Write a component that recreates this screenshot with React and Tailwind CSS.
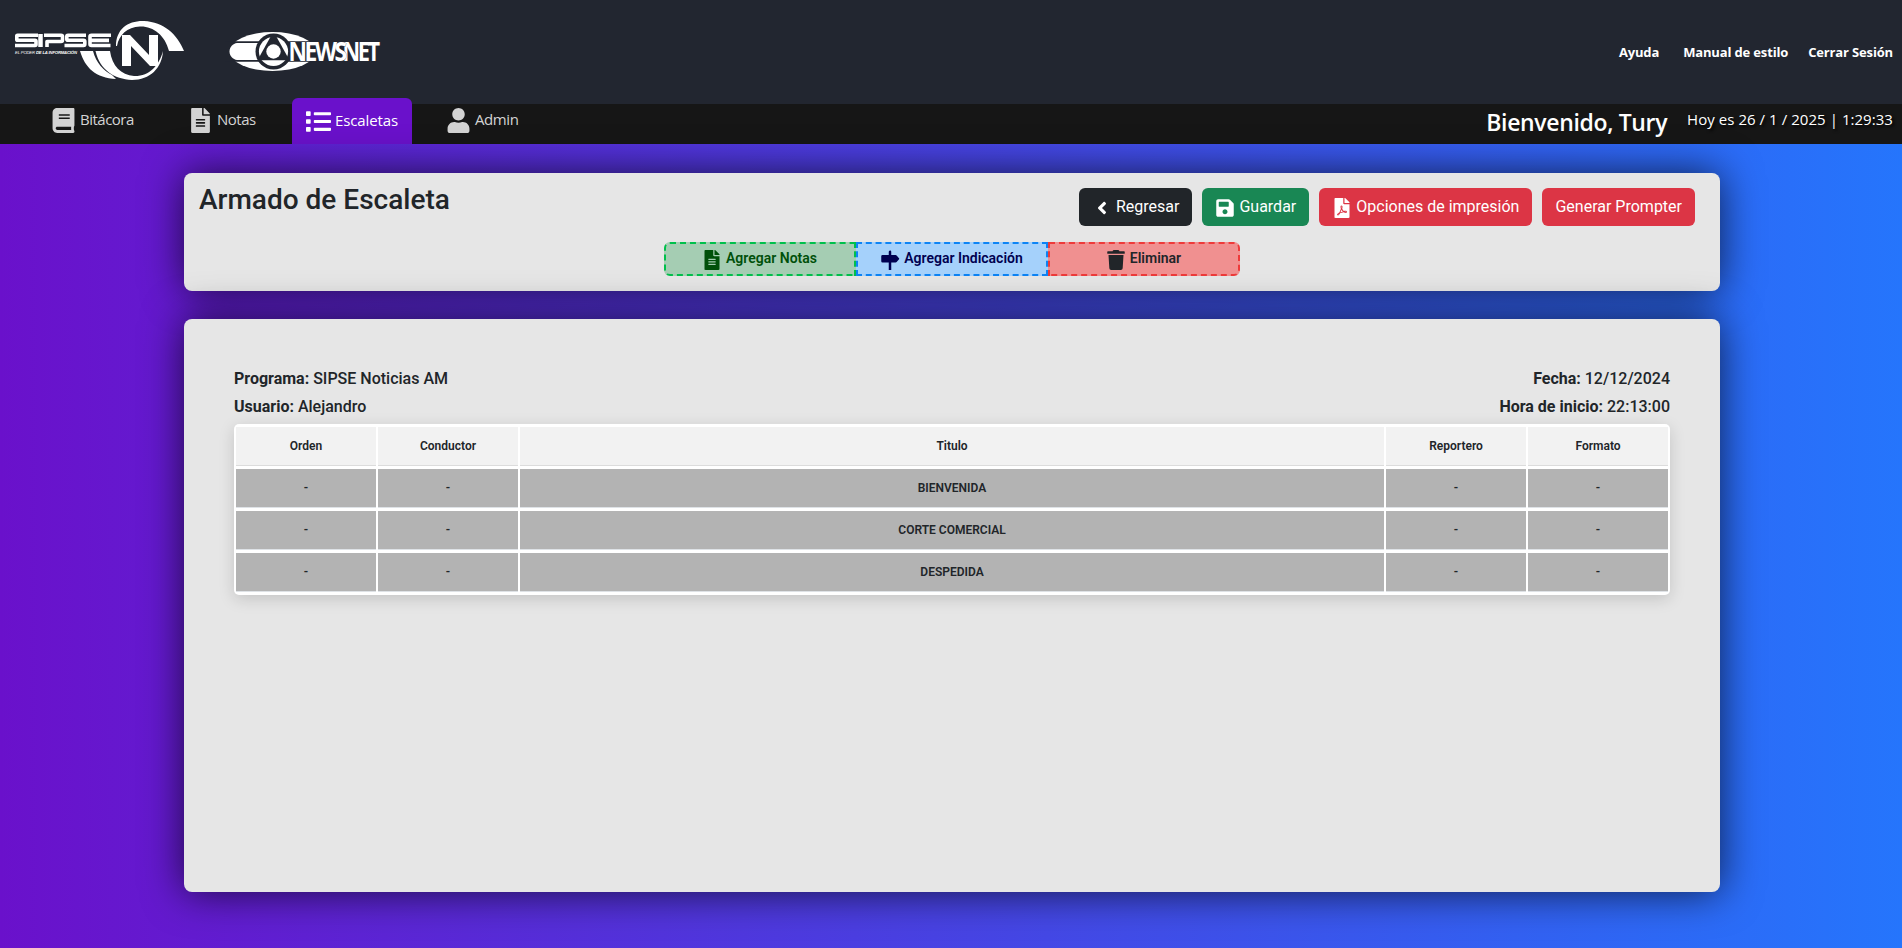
import { FaBook, FaFileAlt, FaList, FaUser, FaFilePdf, FaSave, FaTrash, FaAngleLeft } from "react-icons/fa";
import { BsSignpostFill } from "react-icons/bs";

const cols = ["Orden", "Conductor", "Titulo", "Reportero", "Formato"];
const rows = ["BIENVENIDA", "CORTE COMERCIAL", "DESPEDIDA"];

function SipseLogo() {
  return (
    <svg width="200" height="90" viewBox="0 0 200 90" fill="#fff" className="shrink-0">
      <g stroke="#fff" fill="none" strokeWidth="3.6" strokeLinejoin="round">
        <path d="M38 35.3H17.5Q16.8 35.3 16.8 36V39.5Q16.8 40.3 17.5 40.3H35Q36 40.3 36 41.3V44.5Q36 45.5 35 45.5H15" />
        <path d="M40.500 34V47" strokeWidth="4.500" />
        <path d="M44 35.300H61Q62.500 35.300 62.500 36.500V40Q62.500 41.500 61 41.500H47V47" />
        <path d="M86 35.300H68Q66.800 35.300 66.800 36.500V39.300Q66.800 40.300 68 40.300H83.500Q84.800 40.300 84.800 41.500V44.300Q84.800 45.500 83.500 45.500H64.500" />
        <path d="M111 35.300H91.500Q90 35.300 90 36.500V44.300Q90 45.500 91.500 45.500H110.500M90 40.400H109" />
      </g>
      <text x="15" y="54" fontSize="4.200" fontFamily="Liberation Sans" fontStyle="italic" textLength="62">EL PODER <tspan fontWeight="bold">DE LA INFORMACIÓN</tspan></text>
      <path d="M80 51H93C96 63 104 71 112 75L116 79C96 78 85 68 80 51Z" />
      <path d="M95.500 51H110C112 66 121 75 134 76C149 76.500 159 66 163 51C162 68 150 80 132 80C114 79 100 70 95.500 51Z" />
      <path d="M116 46C116 29 128 20.500 144 21C164 22 177 34 184 51H169C165 35 153 26 140 26.500C127 27 119 35 117 46Z" />
      <path d="M122 66V35H130L149 55V35H158V66H150L131 46V66Z" />
    </svg>
  );
}

function NewsnetLogo() {
  return (
    <svg width="164" height="44" viewBox="0 0 164 44" fill="#fff" className="shrink-0 overflow-visible">
      <ellipse cx="47.500" cy="21.500" rx="43" ry="19.500" />
      <path d="M0 11.300H100V31.700H0Z" fill="#222630" />
      <path d="M12 13H40V30H12C8 29.500 4.500 26 4.500 21.500C4.500 17 8 13.500 12 13Z" />
      <circle cx="48.500" cy="21.500" r="18" fill="#222630" />
      <circle cx="48.500" cy="21.500" r="14.600" />
      <path d="M46.500 5H50.500L64.500 30.300H32.500Z" fill="#222630" />
      <circle cx="48.500" cy="21.500" r="7.200" />
      <g fontFamily="'Open Sans', sans-serif" fontSize="26.500" stroke="#222630" strokeWidth="0.500">
        <text transform="translate(117.500 31.300) scale(0.82 1)" fontWeight="bold" letterSpacing="-3" style={{ paintOrder: "stroke" }}>NET</text>
        <text transform="translate(63.500 31.300) scale(0.86 1)" fontWeight="bold" letterSpacing="-2.800" style={{ paintOrder: "stroke" }}>NEWS</text>
      </g>
    </svg>
  );
}

function Cell({ children, head, wide }) {
  return (
    <div className={`flex h-[39px] items-center justify-center border-b text-xs font-semibold ${wide ? "min-w-0 flex-1" : "w-[140px]"} ${head ? "border-[#dcdcdc] bg-[#f2f2f2]" : "border-[#dee2e6] bg-[#b3b3b3]"}`}>
      {children}
    </div>
  );
}

function Row({ cells, head }) {
  return (
    <div className="flex gap-0.5">
      {cells.map((c, i) => (
        <Cell key={i} head={head} wide={i === 2}>{c}</Cell>
      ))}
    </div>
  );
}

function Button({ icon: Icon, color, children }) {
  return (
    <button className={`flex h-[38px] items-center gap-1 rounded-md px-[13px] pb-px whitespace-nowrap ${color}`}>
      {Icon && <Icon size={20} className="mt-[3px]" />}
      {children}
    </button>
  );
}

function Drop({ icon: Icon, color, children }) {
  return (
    <div className={`flex h-[34px] w-[192px] items-center justify-center gap-1 border-2 border-dashed pb-[2px] text-sm font-semibold ${color}`}>
      <Icon size={20} className="mt-[3px]" />
      {children}
    </div>
  );
}

export default function App() {
  return (
    <div className="h-[948px] overflow-hidden bg-[linear-gradient(to_right,#6a11cb,#2575fc)] font-['Roboto',sans-serif] text-[#212529]">
      <header className="flex h-[104px] items-start justify-between bg-[#222630] font-['Open_Sans',sans-serif] text-white">
        <div className="flex items-start">
          <SipseLogo />
          <div className="pt-[30px] pl-[25px]"><NewsnetLogo /></div>
        </div>
        <nav className="flex gap-6 pt-[42px] pr-[9px] text-[13px] leading-5 font-bold tracking-[-0.15px]">
          <span>Ayuda</span><span>Manual de estilo</span><span className="-ml-1">Cerrar Sesión</span>
        </nav>
      </header>
      <div className="flex h-10 justify-between bg-[#161616] font-['Open_Sans',sans-serif] text-[15px] tracking-[-0.5px] text-[#d3d3d3]">
        <nav className="flex items-start">
          <span className="mt-1 ml-[51px] flex h-[25px] w-[137px] items-center gap-1"><FaBook size={25} /><span className="pb-0.5">Bitácora</span></span>
          <span className="mt-1 flex h-[25px] w-[104px] items-center gap-1"><FaFileAlt size={25} /><span className="pb-0.5">Notas</span></span>
          <span className="-mt-1.5 flex h-[46px] w-[120px] items-center gap-1 rounded-t-md bg-[#6a11cb] pl-3.5 tracking-[-0.1px] text-white"><FaList size={25} /><span className="pb-0.5">Escaletas</span></span>
          <span className="mt-1 ml-[34px] flex h-[25px] items-center gap-1 tracking-[-0.4px]"><FaUser size={25} /><span className="pb-0.5">Admin</span></span>
        </nav>
        <div className="flex items-start gap-5 pr-[9px] text-white">
          <span className="pt-0.5 text-[23px] leading-8 font-semibold tracking-[-0.35px]">Bienvenido, Tury</span>
          <span className="pt-[3px] leading-6 tracking-[0.05px] [text-shadow:2px_2px_3px_#000]">Hoy es 26 / 1 / 2025 | 1:29:33</span>
        </div>
      </div>
      <main className="flex flex-col gap-7 pt-[29px] pr-[182px] pl-[184px]">
        <section className="h-[118px] w-[1536px] rounded-lg bg-[#e6e6e6] pt-[15px] pr-[25px] pl-[15px] shadow-[0_0_40px_rgba(0,0,0,0.7)]">
          <div className="flex h-[38px] items-start justify-between">
            <h1 className="-mt-[5px] text-[28px] leading-[34px] font-medium">Armado de Escaleta</h1>
            <div className="flex gap-2.5 text-white">
              <Button icon={FaAngleLeft} color="bg-[#212529]">Regresar</Button>
              <Button icon={FaSave} color="bg-[#198754]">Guardar</Button>
              <Button icon={FaFilePdf} color="bg-[#dc3545]">Opciones de impresión</Button>
              <Button color="bg-[#dc3545]">Generar Prompter</Button>
            </div>
          </div>
          <div className="mt-4 flex justify-center pl-[10px]">
            <Drop icon={FaFileAlt} color="rounded-l-md border-[#00c04b] bg-[#a5cdb3] pr-px text-[#00500a]">Agregar Notas</Drop>
            <Drop icon={BsSignpostFill} color="border-[#0d84f5] bg-[#a5d1fb] pr-px text-[#000050]">Agregar Indicación</Drop>
            <Drop icon={FaTrash} color="rounded-r-md border-[#ee3a3a] bg-[#f09090] pr-px text-[#212529]">Eliminar</Drop>
          </div>
        </section>
        <section className="h-[573px] w-[1536px] rounded-lg bg-[#e6e6e6] px-[50px] pt-12 shadow-[0_0_40px_rgba(0,0,0,0.7)]">
          <div className="mb-[5px] flex justify-between font-medium">
            <div className="flex flex-col gap-1">
              <p><b>Programa:</b> SIPSE Noticias AM</p>
              <p><b>Usuario:</b> Alejandro</p>
            </div>
            <div className="flex flex-col gap-1 text-right">
              <p><b>Fecha:</b> 12/12/2024</p>
              <p><b>Hora de inicio:</b> 22:13:00</p>
            </div>
          </div>
          <div className="flex flex-col gap-[3px] rounded-[5px] bg-white px-0.5 py-[3px] shadow-[0_4px_16px_rgba(0,0,0,0.15)]">
            <Row cells={cols} head />
            {rows.map((r) => <Row key={r} cells={["-", "-", r, "-", "-"]} />)}
          </div>
        </section>
      </main>
    </div>
  );
}
